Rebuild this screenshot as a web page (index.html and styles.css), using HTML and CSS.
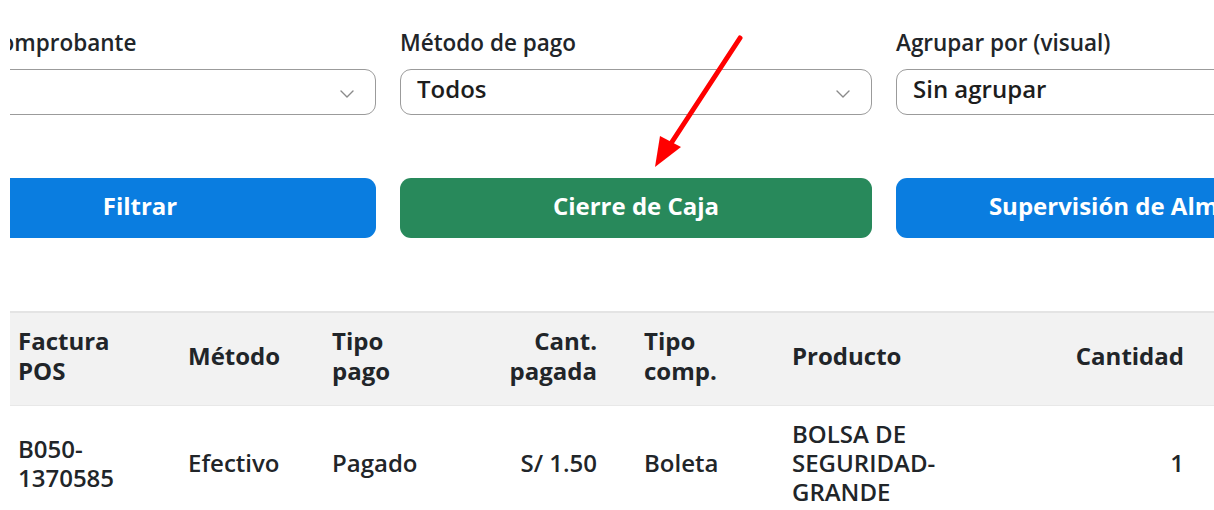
FILE: index.html
```html
<!DOCTYPE html>
<html lang="es">
<head>
<meta charset="utf-8">
<title>Reporte de ventas</title>
<link rel="stylesheet" href="styles.css">
</head>
<body>
<div class="viewport">
  <div class="filters">
    <div class="field">
      <label class="label">Tipo de comprobante</label>
      <div class="select-box">
        <span class="select-value">Todos</span>
        <svg class="chevron" width="14" height="8" viewBox="0 0 14 8"><path d="M1 1l6 6 6-6" fill="none" stroke="#8a8a8a" stroke-width="1.4" stroke-linecap="round" stroke-linejoin="round"/></svg>
      </div>
    </div>
    <div class="field">
      <label class="label">Método de pago</label>
      <div class="select-box">
        <span class="select-value">Todos</span>
        <svg class="chevron" width="14" height="8" viewBox="0 0 14 8"><path d="M1 1l6 6 6-6" fill="none" stroke="#8a8a8a" stroke-width="1.4" stroke-linecap="round" stroke-linejoin="round"/></svg>
      </div>
    </div>
    <div class="field">
      <label class="label">Agrupar por (visual)</label>
      <div class="select-box">
        <span class="select-value">Sin agrupar</span>
        <svg class="chevron" width="14" height="8" viewBox="0 0 14 8"><path d="M1 1l6 6 6-6" fill="none" stroke="#8a8a8a" stroke-width="1.4" stroke-linecap="round" stroke-linejoin="round"/></svg>
      </div>
    </div>
    <button class="btn btn-blue">Filtrar</button>
    <button class="btn btn-green">Cierre de Caja</button>
    <button class="btn btn-blue">Supervisión de Almacén</button>
  </div>

  <div class="table-wrap">
    <table class="report">
      <colgroup>
        <col class="c1"><col class="c2"><col class="c3"><col class="c4"><col class="c5"><col class="c6"><col class="c7"><col class="c8">
      </colgroup>
      <thead>
        <tr>
          <th>Factura POS</th>
          <th>Método</th>
          <th>Tipo pago</th>
          <th class="num">Cant. pagada</th>
          <th>Tipo comp.</th>
          <th>Producto</th>
          <th class="num qty">Cantidad</th>
          <th class="num">Precio</th>
        </tr>
      </thead>
      <tbody>
        <tr>
          <td>B050-1370585</td>
          <td>Efectivo</td>
          <td>Pagado</td>
          <td class="num">S/ 1.50</td>
          <td>Boleta</td>
          <td>BOLSA DE SEGURIDAD-GRANDE</td>
          <td class="num qty">1</td>
          <td class="num">S/ 1.50</td>
        </tr>
      </tbody>
    </table>
  </div>

  <svg class="arrow" width="1214" height="200" viewBox="0 0 1214 200">
    <line x1="740" y1="38" x2="668" y2="148" stroke="#ff0000" stroke-width="5" stroke-linecap="round"/>
    <polygon points="655,167 660,136 681,147" fill="#ff0000"/>
  </svg>
</div>
</body>
</html>
```
FILE: styles.css
```css
html, body {
  margin: 0;
  padding: 0;
  background: #ffffff;
}

body {
  font-family: "Open Sans", "Noto Sans", sans-serif;
  color: #212529;
  width: 1214px;
  height: 510px;
  overflow: hidden;
}

.viewport {
  margin-left: 10px;
  overflow: hidden;
  padding-top: 28px;
  height: 482px;
}

.filters {
  display: grid;
  grid-template-columns: repeat(3, 472px);
  column-gap: 24px;
  row-gap: 63px;
  margin-left: -106px;
  width: max-content;
}

.field {
  display: flex;
  flex-direction: column;
  gap: 11px;
}

.label {
  font-size: 22.5px;
  font-weight: 600;
  line-height: 30px;
  white-space: nowrap;
}

.select-box {
  position: relative;
  box-sizing: border-box;
  height: 46px;
  border: 1.5px solid #9b9b9b;
  border-radius: 11px;
  display: flex;
  align-items: center;
  padding-left: 16px;
  padding-bottom: 7px;
  background: #fff;
}

.select-value {
  font-size: 24px;
  font-weight: 600;
  color: #1d1d1d;
  white-space: nowrap;
}

.chevron {
  position: absolute;
  right: 21px;
  top: 20px;
}

.btn {
  height: 60px;
  border: none;
  border-radius: 11px;
  color: #ffffff;
  font-family: "Open Sans", "Noto Sans", sans-serif;
  font-size: 24px;
  font-weight: 700;
  white-space: nowrap;
  overflow: hidden;
  padding: 0 0 6px 0;
}

.btn-blue {
  background: #0a7de0;
}

.btn-green {
  background: #28895b;
}

.table-wrap {
  margin-top: 73px;
  margin-left: -12px;
}

.report {
  border-collapse: collapse;
  table-layout: fixed;
  width: 1446px;
  border-top: 2px solid #e4e4e4;
}

.c1 { width: 170px; }
.c2 { width: 144px; }
.c3 { width: 134px; }
.c4 { width: 178px; }
.c5 { width: 148px; }
.c6 { width: 210px; }
.c7 { width: 222px; }
.c8 { width: 240px; }

.report th,
.report td {
  text-align: left;
  padding: 13px 20px 19px 20px;
  font-size: 24px;
  vertical-align: middle;
}

.report th {
  background: #f2f2f2;
  font-weight: 700;
  line-height: 30px;
  border-bottom: 1px solid #e8e8e8;
}

.report td {
  font-weight: 600;
  line-height: 29px;
}

.report .num {
  text-align: right;
  padding-right: 27px;
}

.report .qty {
  padding-right: 20px;
}

.arrow {
  position: absolute;
  left: 0;
  top: 0;
  pointer-events: none;
}
```
